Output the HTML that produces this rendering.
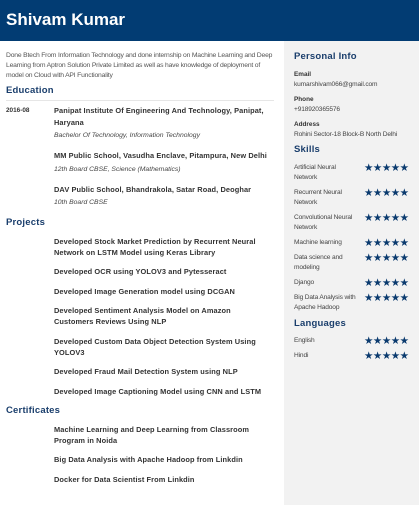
<!DOCTYPE html>
<html><head><meta charset="utf-8"><style>
*{margin:0;padding:0;box-sizing:border-box}
body{width:419px;height:505px;position:relative;background:#fff;font-family:"Liberation Sans",sans-serif;overflow:hidden}
.hd{position:absolute;left:0;top:0;width:419px;height:41px;background:#023c73}
.nm{position:absolute;left:6px;top:9px;color:#fff;font-size:17px;font-weight:bold;line-height:22px}
.sb{position:absolute;left:284px;top:41px;width:135px;height:464px;background:#f2f2f2}
.t{position:absolute;white-space:nowrap;line-height:10px}
.s{font-size:6.8px;color:#555;letter-spacing:-0.2px}
.h{font-size:9.5px;font-weight:bold;color:#1a3e6c;line-height:12px;letter-spacing:0.2px}
.b{font-size:7.4px;font-weight:bold;color:#333;letter-spacing:0.1px}
.i{font-size:6.8px;font-style:italic;color:#444}
.l{font-size:6.6px;color:#444;letter-spacing:-0.15px}
.lb{font-size:6.4px;font-weight:bold;color:#333}
.st{font-size:10.5px;color:#0a3a6e;letter-spacing:-0.5px;line-height:10px}
.rule{position:absolute;left:6px;top:100px;width:268px;height:1px;background:#e6e6e6}
</style></head><body>
<div class="hd"></div><div class="nm">Shivam Kumar</div>
<div class="sb"></div>
<div class="t s" style="left:6px;top:51px">Done Btech From Information Technology and done internship on Machine Learning and Deep</div>
<div class="t s" style="left:6px;top:61px">Learning from Aptron Solution Private Limited as well as have knowledge of deployment of</div>
<div class="t s" style="left:6px;top:71px">model on Cloud with API Functionality</div>
<div class="t h" style="left:6px;top:85px">Education</div>
<div class="rule"></div>
<div class="t lb" style="left:6px;top:106px">2016-08</div>
<div class="t b" style="left:54px;top:106px">Panipat Institute Of Engineering And Technology, Panipat,</div>
<div class="t b" style="left:54px;top:118px">Haryana</div>
<div class="t i" style="left:54px;top:131px">Bachelor Of Technology, Information Technology</div>
<div class="t b" style="left:54px;top:151px">MM Public School, Vasudha Enclave, Pitampura, New Delhi</div>
<div class="t i" style="left:54px;top:165px">12th Board CBSE, Science (Mathematics)</div>
<div class="t b" style="left:54px;top:185px">DAV Public School, Bhandrakola, Satar Road, Deoghar</div>
<div class="t i" style="left:54px;top:198px">10th Board CBSE</div>
<div class="t h" style="left:6px;top:217px">Projects</div>
<div class="t b" style="left:54px;top:237px">Developed Stock Market Prediction by Recurrent Neural</div>
<div class="t b" style="left:54px;top:248px">Network on LSTM Model using Keras Library</div>
<div class="t b" style="left:54px;top:267px">Developed OCR using YOLOV3 and Pytesseract</div>
<div class="t b" style="left:54px;top:287px">Developed Image Generation model using DCGAN</div>
<div class="t b" style="left:54px;top:306px">Developed Sentiment Analysis Model on Amazon</div>
<div class="t b" style="left:54px;top:317px">Customers Reviews Using NLP</div>
<div class="t b" style="left:54px;top:337px">Developed Custom Data Object Detection System Using</div>
<div class="t b" style="left:54px;top:348px">YOLOV3</div>
<div class="t b" style="left:54px;top:367px">Developed Fraud Mail Detection System using NLP</div>
<div class="t b" style="left:54px;top:387px">Developed Image Captioning Model using CNN and LSTM</div>
<div class="t h" style="left:6px;top:405px">Certificates</div>
<div class="t b" style="left:54px;top:425px">Machine Learning and Deep Learning from Classroom</div>
<div class="t b" style="left:54px;top:436px">Program in Noida</div>
<div class="t b" style="left:54px;top:455px">Big Data Analysis with Apache Hadoop from Linkdin</div>
<div class="t b" style="left:54px;top:475px">Docker for Data Scientist From Linkdin</div>

<div class="t h" style="left:294px;top:51px">Personal Info</div>
<div class="t lb" style="left:294px;top:70px">Email</div>
<div class="t l" style="left:294px;top:80px">kumarshivam066@gmail.com</div>
<div class="t lb" style="left:294px;top:95px">Phone</div>
<div class="t l" style="left:294px;top:105px">+918920365576</div>
<div class="t lb" style="left:294px;top:120px">Address</div>
<div class="t l" style="left:294px;top:130px">Rohini Sector-18 Block-B North Delhi</div>
<div class="t h" style="left:294px;top:144px">Skills</div>
<div class="t l" style="left:294px;top:163px">Artificial Neural</div>
<div class="t l" style="left:294px;top:173px">Network</div>
<div class="t st" style="left:364px;top:163px">★★★★★</div>
<div class="t l" style="left:294px;top:188px">Recurrent Neural</div>
<div class="t l" style="left:294px;top:198px">Network</div>
<div class="t st" style="left:364px;top:188px">★★★★★</div>
<div class="t l" style="left:294px;top:213px">Convolutional Neural</div>
<div class="t l" style="left:294px;top:223px">Network</div>
<div class="t st" style="left:364px;top:213px">★★★★★</div>
<div class="t l" style="left:294px;top:238px">Machine learning</div>
<div class="t st" style="left:364px;top:238px">★★★★★</div>
<div class="t l" style="left:294px;top:253px">Data science and</div>
<div class="t l" style="left:294px;top:263px">modeling</div>
<div class="t st" style="left:364px;top:253px">★★★★★</div>
<div class="t l" style="left:294px;top:278px">Django</div>
<div class="t st" style="left:364px;top:278px">★★★★★</div>
<div class="t l" style="left:294px;top:293px">Big Data Analysis with</div>
<div class="t l" style="left:294px;top:303px">Apache Hadoop</div>
<div class="t st" style="left:364px;top:293px">★★★★★</div>
<div class="t h" style="left:294px;top:318px">Languages</div>
<div class="t l" style="left:294px;top:336px">English</div>
<div class="t st" style="left:364px;top:336px">★★★★★</div>
<div class="t l" style="left:294px;top:351px">Hindi</div>
<div class="t st" style="left:364px;top:351px">★★★★★</div>
</body></html>
